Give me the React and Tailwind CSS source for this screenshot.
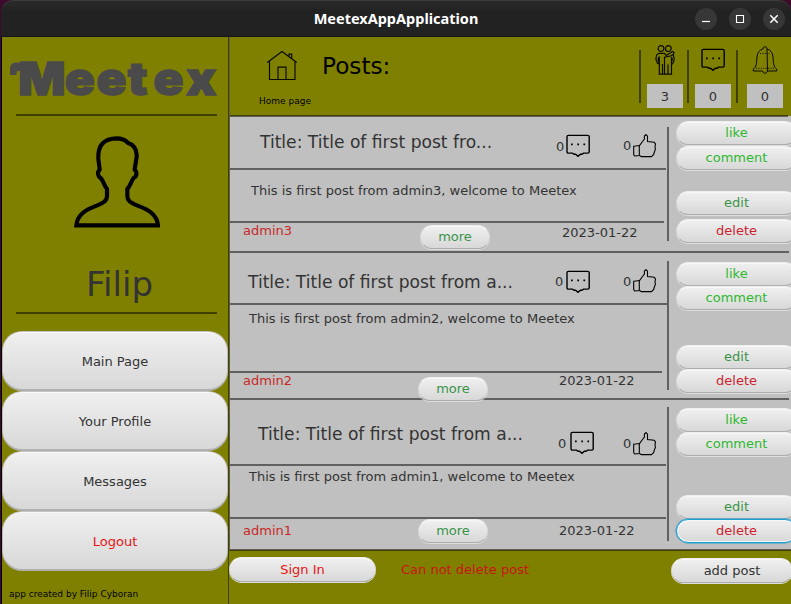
import React from "react";

const BTN =
  "flex shrink-0 items-center justify-center border bg-linear-to-b from-[#f0f0f0] to-[#d8d8d8] whitespace-nowrap";
const PILL =
  BTN +
  " rounded-full border-t-[#eeeeee] border-x-[#d6d6d6] border-b-[#adadad] shadow-[inset_0_1px_0_#f8f8f8,0_1px_0_#dedede]";

function CommentIcon({ className }) {
  return (
    <svg className={className} width="25" height="24" viewBox="0 0 25 24" fill="none" stroke="#000" strokeWidth="1.4">
      <path d="M2 1.4H21.8Q23.200 1.4 23.200 2.6V17.8Q23.200 19.1 21.8 19.1H17.500L16 20.2H14.400L12 22.300L9.600 20.2H8L6.500 19.1H2.300Q1 19.100 1 17.800V2.600Q1 1.400 2.300 1.400Z" />
      <path d="M5 10.300h1.700M11.300 10.300h1.700M17.400 10.300h1.700" strokeWidth="1.7" />
    </svg>
  );
}

function ThumbIcon({ className }) {
  return (
    <svg className={className} width="24" height="24" viewBox="0 0 24 24" fill="none" stroke="#000" strokeWidth="1.1">
      <path d="M.7 12.2L6.3 11.5V21.6L1.6 22L.7 20.5Z" />
      <path d="M6.3 11.8L9.5 7.5L11.4 5V2L13 .6L14.5 2.2V7.5L21.2 8.3L22.5 9.8L22 12.8L22.4 15.5L21.5 17.5L20.7 20.5L18.5 22.6H8.5L6.3 21.6" />
    </svg>
  );
}

function HomeIcon() {
  return (
    <svg className="ml-[35px] mt-[13px] shrink-0" width="34" height="32" viewBox="0 0 34 32" fill="none" stroke="#0a0a00" strokeWidth="1.2">
      <path d="M2.2 12.6L17 1.6L31.8 12.6M4.5 11.5V29.5H30V11.5M13 29.5V17.2H21V29.5M24 6.2V4.2H26.7V8.6" />
    </svg>
  );
}

function FriendsIcon() {
  return (
    <svg width="20" height="30" viewBox="0 0 20 30" fill="none" stroke="#0a0a00" strokeWidth="1.2">
      <circle cx="6" cy="3.6" r="2.9" />
      <circle cx="13.3" cy="3.6" r="2.9" />
      <path d="M4 8.3H9.5L11.3 10.5L17.5 6.5L19 7.5L18.3 9.5L15.5 11L9.5 12.2V29.2H7.5V19V29.2H4.3V11.5L3 14L4.3 19L2.5 18.2L.8 14L1.7 9.8L4 8.3Z" />
      <path d="M9.5 29.2H13V19.5V29.2H16.5V20L18.6 17L19.2 13.8L18.2 9.5M16.5 20V12L17.3 14.5L16.5 17" />
    </svg>
  );
}

function BellIcon() {
  return (
    <svg width="26" height="28" viewBox="0 0 26 28" fill="none" stroke="#0a0a00" strokeWidth="1">
      <path d="M11 3Q11 .7 13 .7Q15 .7 15 3M11 3Q5.500 4.500 5 11Q4.600 19 3.500 21L1.300 23V25H10.500M15.500 25H24.700V23L22.500 21Q21.400 19 21 11Q20.500 4.500 15 3Z" />
      <path d="M10.500 25Q11.500 27.400 13 27.400Q14.500 27.400 15.500 25" />
      <path d="M8 7.500H18M4 22.300H22" strokeDasharray="1.200 1.200" strokeWidth=".8" />
    </svg>
  );
}

function Person() {
  return (
    <svg className="ml-[72px] mt-[19px] block" width="86" height="94" viewBox="222 45 258 282" fill="none" stroke="#000" strokeWidth="12.500">
      <path d="M229 316C232 285 255 270 290 257C314 247 321 241 321 228V207C311 195 312 185 302 174C293 169 291 158 299 148L295 116C293 75 312 56 350 55C366 55 376 60 383 68C402 74 411 86 410 110L404 148C412 158 411 169 401 174C392 185 393 195 382 207V228C382 241 389 247 413 257C448 270 471 285 474 316Z" />
    </svg>
  );
}

function Logo() {
  return (
    <svg className="block" width="226" height="77" viewBox="2 37 226 77" fill="#4a4a4a">
      <path d="M10 75V68Q10.500 63 15.500 62.500H24V74H21V71H18Q16.500 71 16.500 75Z" />
      <text
        x="16.600 58.800 87.700 116.200 139.500 169.300"
        y="95"
        transform="scale(1.1 1)"
        className="font-['Inter'] text-[45px] font-black"
        stroke="#4a4a4a"
        strokeWidth="1.400"
      >
        Meetex
      </text>
    </svg>
  );
}

const posts = [
  {
    title: "Title: Title of first post fro...",
    body: "This is first post from admin3, welcome to Meetex",
    author: "admin3",
    titleRow: "h-[51px] pl-[30px]",
    titleText: "mt-[14px] w-[296px]",
    c0: "mt-[22px] w-[10px]",
    cIcon: "mt-[17px] mr-[32px]",
    l0: "mt-[21px]",
    lIcon: "mt-[17px]",
    line1: "w-[436px]",
    bodyRow: "h-[51px] pl-[21px] pt-[13px]",
    line2: "w-[434px]",
    foot: "h-[28px]",
    admin: "mt-0 w-[177px]",
    more: "mt-[2px] mr-[72px]",
    date: "mt-[2px]",
    vline: "mt-[10px] h-[114px]",
    stack: "pt-[4px]",
    g1: "mt-[1px]",
    g2: "mt-[21px]",
    g3: "mt-[4px]",
  },
  {
    title: "Title: Title of first post from a...",
    body: "This is first post from admin2, welcome to Meetex",
    author: "admin2",
    titleRow: "h-[50px] pl-[18px]",
    titleText: "mt-[18px] w-[307px]",
    c0: "mt-[21px] w-[11px]",
    cIcon: "mt-[17px] mr-[32px]",
    l0: "mt-[21px]",
    lIcon: "mt-[16px]",
    line1: "w-[437px]",
    bodyRow: "h-[66px] pl-[19px] pt-[6px]",
    line2: "w-[432px]",
    foot: "h-[25px]",
    admin: "mt-0 w-[175px]",
    more: "mt-[4px] mr-[71px]",
    date: "mt-0",
    vline: "mt-[8px] h-[129px]",
    stack: "pt-[9px]",
    g1: "mt-0",
    g2: "mt-[35px]",
    g3: "mt-0",
  },
  {
    title: "Title: Title of first post from a...",
    body: "This is first post from admin1, welcome to Meetex",
    author: "admin1",
    titleRow: "h-[64px] pl-[28px]",
    titleText: "mt-[23px] w-[300px]",
    c0: "mt-[36px] w-[12px]",
    cIcon: "mt-[31px] mr-[28px]",
    l0: "mt-[36px]",
    lIcon: "mt-[32px]",
    line1: "w-[436px]",
    bodyRow: "h-[51px] pl-[19px] pt-[3px]",
    line2: "w-[436px]",
    foot: "h-[30px]",
    admin: "mt-[4px] w-[175px]",
    more: "mt-0 mr-[71px]",
    date: "mt-[4px]",
    vline: "mt-[7px] h-[134px]",
    stack: "pt-[8px]",
    g1: "mt-0",
    g2: "mt-[39px]",
    g3: "mt-0",
    focused: true,
  },
];

function Post({ p }) {
  return (
    <div className="flex items-start">
      <div className="flex w-[437px] shrink-0 flex-col">
        <div className={"flex items-start " + p.titleRow}>
          <div className={"shrink-0 text-[17.100px] leading-[22px] whitespace-nowrap " + p.titleText}>{p.title}</div>
          <span className={"shrink-0 " + p.c0}>0</span>
          <CommentIcon className={"shrink-0 " + p.cIcon} />
          <span className={"w-[10px] shrink-0 " + p.l0}>0</span>
          <ThumbIcon className={"shrink-0 " + p.lIcon} />
        </div>
        <div className={"h-[2px] bg-[#606060] " + p.line1} />
        <div className={p.bodyRow}>{p.body}</div>
        <div className={"h-[2px] bg-[#606060] " + p.line2} />
        <div className={"flex items-start pl-[13px] " + p.foot}>
          <span className={"shrink-0 text-[#c82828] " + p.admin}>{p.author}</span>
          <button className={PILL + " z-10 h-[24px] w-[70px] text-[#3a9448] " + p.more}>more</button>
          <span className={"whitespace-nowrap " + p.date}>2023-01-22</span>
        </div>
      </div>
      <div className={"w-[2px] shrink-0 bg-[#606060] " + p.vline} />
      <div className={"ml-[7px] flex flex-col " + p.stack}>
        <button className={PILL + " h-[24px] w-[121px] text-[#2eb82e]"}>like</button>
        <button className={PILL + " h-[24px] w-[121px] text-[#2eb82e] " + p.g1}>comment</button>
        <button className={PILL + " h-[24px] w-[121px] text-[#3a9448] " + p.g2}>edit</button>
        <button
          className={
            (p.focused
              ? BTN + " rounded-full border-[#1e9fd0] shadow-[inset_0_0_0_1px_#f4f8fa,0_0_0_0.5px_#1e9fd0]"
              : PILL) +
            " h-[24px] w-[121px] text-[#cc1f2f] " +
            p.g3
          }
        >
          delete
        </button>
      </div>
    </div>
  );
}

function Counter({ icon, value, className }) {
  return (
    <div className={"flex w-[36px] shrink-0 flex-col items-center " + className}>
      <div className="flex h-[47px] items-start">{icon}</div>
      <div className="flex h-[24px] w-[36px] items-center justify-center bg-[#c0c0c0] pt-px">{value}</div>
    </div>
  );
}

const VBar = ({ className }) => <div className={"mt-[13px] h-[53px] w-[2px] shrink-0 bg-[#404000] " + className} />;

export default function App() {
  return (
    <div className="flex h-[604px] w-[791px] flex-col overflow-hidden bg-[#3d0a2c] font-['DejaVu_Sans',sans-serif] text-[13px] leading-[16px] text-[#333333]">
      <header className="ml-px flex h-[37px] shrink-0 items-center rounded-t-[12px] border-t border-b border-t-[#3a3a3a] border-b-[#161616] bg-linear-to-b from-[#2a2a2a] to-[#222222] to-30%">
        <div className="w-[108px]" />
        <div className="flex-1 text-center font-['Noto_Sans',sans-serif] text-[14.500px] font-bold text-white">
          <span className="ml-[-12px] inline-block pb-[2px]">MeetexAppApplication</span>
        </div>
        <div className="flex gap-[12px] pr-[6px]">
          <svg width="22" height="22" viewBox="0 0 22 22"><circle cx="11" cy="11" r="11" fill="#373737" /><path d="M7 13.500H15" stroke="#fff" strokeWidth="1.2" /></svg>
          <svg width="22" height="22" viewBox="0 0 22 22"><circle cx="11" cy="11" r="11" fill="#373737" /><path d="M7.500 7.500H14.500V14.500H7.500Z" fill="none" stroke="#fff" strokeWidth="1.1" /></svg>
          <svg width="22" height="22" viewBox="0 0 22 22"><circle cx="11" cy="11" r="11" fill="#373737" /><path d="M7.300 7.300L14.700 14.700M14.700 7.300L7.300 14.700" stroke="#fff" strokeWidth="1.5" /></svg>
        </div>
      </header>

      <div className="ml-px flex h-[567px] border-l border-black bg-[#808000]">
        <aside className="flex w-[226px] shrink-0 flex-col">
          <Logo />
          <div className="ml-[14px] h-[2px] w-[201px] shrink-0 bg-[#404000]" />
          <div className="h-[196px] shrink-0">
            <Person />
            <div className="mt-[36px] pl-[9px] text-center text-[34px] leading-[38px]">Filip</div>
          </div>
          <div className="ml-[14px] h-[2px] w-[201px] shrink-0 bg-[#404000]" />
          <nav className="mt-[17px] flex flex-col">
            {["Main Page", "Your Profile", "Messages", "Logout"].map((t) => (
              <button
                key={t}
                className={
                  BTN +
                  " h-[60px] w-[226px] rounded-[20px] border-b-2 border-t-[#c4c4c4] border-x-[#bdbdbd] border-b-[#b0b0b0] pt-[3px] shadow-[inset_0_1px_0_#fafafa] " +
                  (t === "Logout" ? "text-[#e81414]" : "")
                }
              >
                {t}
              </button>
            ))}
          </nav>
          <div className="mt-[16px] pl-[7px] text-[9px] leading-[14px] text-black">app created by Filip Cyboran</div>
        </aside>

        <main className="flex w-[563px] shrink-0 flex-col border-l border-[#404000]">
          <div className="border-l border-[#606040]">
            <div className="flex h-[78px] items-start">
              <div className="w-[92px] shrink-0">
                <HomeIcon />
                <div className="mt-[12px] pl-[29px] text-[9px] leading-[14px] whitespace-nowrap text-black">Home page</div>
              </div>
              <div className="mt-[14px] w-[317px] shrink-0 text-[23.200px] leading-[30px] text-black">Posts:</div>
              <VBar className="" />
              <Counter icon={<div className="mt-[8px]"><FriendsIcon /></div>} value="3" className="ml-[6px]" />
              <VBar className="ml-[4px]" />
              <Counter icon={<CommentIcon className="mt-[11px]" />} value="0" className="ml-[6px]" />
              <VBar className="ml-[5px]" />
              <Counter icon={<div className="mt-[9px]"><BellIcon /></div>} value="0" className="ml-[9px]" />
            </div>
            <div className="h-px w-[558px] bg-[#404000]" />
            <div className="bg-[#c0c0c0]">
              <div className="h-px w-[558px] bg-[#606060]" />
              {posts.map((p, i) => (
                <React.Fragment key={p.author}>
                  {i > 0 && <div className="h-[2px] w-[559px] bg-[#606060]" />}
                  <Post p={p} />
                </React.Fragment>
              ))}
              <div className="h-px bg-[#606060]" />
            </div>
          </div>
          <div className="h-px shrink-0 bg-[#404000]" />
          <div className="flex items-start pt-[6px]">
            <button className={PILL + " h-[25px] w-[147px] text-[#e81414]"}>Sign In</button>
            <span className="mt-[5px] ml-[25px] w-[270px] shrink-0 text-[#c81414]">Can not delete post</span>
            <button className={PILL + " mt-px h-[25px] w-[122px]"}>add post</button>
          </div>
        </main>
      </div>
    </div>
  );
}
